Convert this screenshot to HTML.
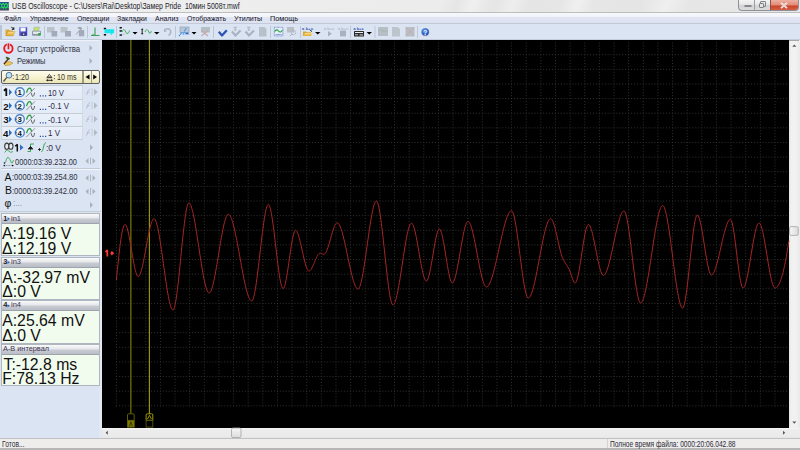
<!DOCTYPE html>
<html><head><meta charset="utf-8"><style>*{margin:0;padding:0;box-sizing:border-box}
html,body{width:800px;height:450px;overflow:hidden;background:#f0f0f0;font-family:"Liberation Sans",sans-serif;color:#000;position:relative}
.a{position:absolute}
.t{position:absolute;white-space:pre;line-height:1;transform-origin:0 0}
#title{left:0;top:0;width:800px;height:13px;background:linear-gradient(110deg,#efefef 0,#ececec 55%,#e6e6e6 57%,#f0f0f0 59%,#e7e7e7 61%,#e6e6e6 62%,#eeeeee 64%,#e5e5e5 66%,#e6e6e6 70%,#f0f0f0 72%,#e6e6e6 74%,#e5e5e5 80%,#efefef 83%,#e6e6e6 86%,#e8e8e8 100%);border-bottom:1px solid #bdbdbd}
#menu{left:0;top:13px;width:800px;height:11px;background:linear-gradient(#f7f8fc 0,#f2f4fa 35%,#e0e4f3 45%,#dde2f1 100%);border-bottom:1px solid #c4c9d8}
#tool{left:0;top:24px;width:800px;height:16px;background:#dae4f2}
#panel{left:0;top:40px;width:102px;height:397.5px;background:#dae4f2}
#scope{left:101.5px;top:40px;width:687.5px;height:387.5px;background:#000}
#vscroll{left:789px;top:40px;width:10px;height:387px;background:linear-gradient(90deg,#e6e6e6,#f1f1f1 25%,#f1f1f1 75%,#e9e9e9);border-top:1px solid #a8a8a8}
#hscroll{left:101px;top:427.5px;width:699px;height:10.5px;background:linear-gradient(#f6f6f6,#ececec 20%,#ebebeb 80%,#e6e6e6)}
#status{left:0;top:437.5px;width:800px;height:12.5px;background:#efedeb;border-top:1.5px solid #bfc1c4;border-bottom:2px solid #b6b6b6}
.sep{position:absolute;top:26px;width:1px;height:12px;background:#b7c2d3;box-shadow:1px 0 0 #f4f7fb}
.row{position:absolute;left:1px;width:82px;height:13px;background:linear-gradient(#e9f0fa,#e3ebf7);border-top:1px solid #c6ccd4;border-left:1px solid #cdd5df;border-right:1px solid #d2dae4}
.box{position:absolute;left:1px;width:98.5px;border:1px solid #b0b6c0}
.bh{position:absolute;left:0;top:0;width:97px;height:10px;background:linear-gradient(#fafafa,#e6e7ea 45%,#c9ccd3 55%,#b9bdc6);border-bottom:1px solid #9ea3ad}
.bb{position:absolute;left:0;width:97px;background:#f1fcee}
</style></head><body><div id="title" class="a"></div>
<div id="menu" class="a"></div>
<div id="tool" class="a"></div>
<div id="panel" class="a"></div>
<div id="scope" class="a"></div>
<div id="vscroll" class="a"></div>
<div id="hscroll" class="a"></div>
<div id="status" class="a"></div>

<!-- title -->
<svg class="a" style="left:0;top:0" width="10" height="12"><rect x="0" y="2" width="8.8" height="8.3" fill="#2a3ea0"/><rect x="0" y="8.6" width="8.8" height="1.7" fill="#4a5058"/><path d="M0.3 3.2 L1.8 5.2 L3.2 3.2 L4.6 5.2 L6 3.2 L7.5 5.2 L8.6 3.5 M0.5 8.3 L1.8 6.3 L3.2 8.3 L4.4 6.2 L5.8 8.3 L7.2 6.3 L8.5 8" stroke="#1ee048" stroke-width="1.1" fill="none"/></svg>
<div class="t" style="left:12.3px;top:1.99px;font-size:8.4px;color:#1d1d2d;font-weight:normal;font-family:'Liberation Sans',sans-serif;transform:scaleX(0.829);">USB Oscilloscope - C:\Users\Rai\Desktop\Замер Pride  10мин 5008т.mwf</div>
<div class="a" style="left:738px;top:0;width:61px;height:11px;border:1px solid #8d9097;border-top:none;border-radius:0 0 4px 4px;overflow:hidden;background:linear-gradient(#f4f4f4,#e4e4e4 50%,#d2d2d2 51%,#dcdcdc)">
 <div class="a" style="left:15px;top:0;width:1px;height:11px;background:#9a9da3"></div>
 <div class="a" style="left:31px;top:0;width:29px;height:11px;background:linear-gradient(#eeb1a3,#e18a75 45%,#c9452b 55%,#d9644a);border-left:1px solid #8f5147"></div>
 <div class="a" style="left:5px;top:4.5px;width:7.5px;height:2.8px;border:1px solid #85888e;border-radius:1px;background:#e8e8e8"></div>
 <div class="a" style="left:21px;top:1px;width:5.5px;height:5.5px;border:1px solid #7d8086;border-radius:1px;background:transparent"></div>
 <div class="a" style="left:19.5px;top:2.5px;width:5.5px;height:5.5px;border:1px solid #7d8086;border-radius:1px;background:#e4e4e4"></div>
 <svg class="a" style="left:41px;top:2px" width="8" height="7"><path d="M1 0.8 L7 6.2 M7 0.8 L1 6.2" stroke="#fff" stroke-width="1.8"/><path d="M1 0.8 L7 6.2 M7 0.8 L1 6.2" stroke="#6a2a20" stroke-width="0.5" opacity="0.5"/></svg>
</div>

<!-- menu -->
<div class="t" style="left:4.1px;top:15.21px;font-size:7.2px;color:#14141f;font-weight:normal;font-family:'Liberation Sans',sans-serif;transform:scaleX(0.962);">Файл</div>
<div class="t" style="left:29.5px;top:15.21px;font-size:7.2px;color:#14141f;font-weight:normal;font-family:'Liberation Sans',sans-serif;transform:scaleX(0.963);">Управление</div>
<div class="t" style="left:76.5px;top:15.21px;font-size:7.2px;color:#14141f;font-weight:normal;font-family:'Liberation Sans',sans-serif;transform:scaleX(0.961);">Операции</div>
<div class="t" style="left:117px;top:15.21px;font-size:7.2px;color:#14141f;font-weight:normal;font-family:'Liberation Sans',sans-serif;transform:scaleX(0.964);">Закладки</div>
<div class="t" style="left:155px;top:15.21px;font-size:7.2px;color:#14141f;font-weight:normal;font-family:'Liberation Sans',sans-serif;transform:scaleX(0.968);">Анализ</div>
<div class="t" style="left:187px;top:15.21px;font-size:7.2px;color:#14141f;font-weight:normal;font-family:'Liberation Sans',sans-serif;transform:scaleX(0.960);">Отображать</div>
<div class="t" style="left:233.8px;top:15.21px;font-size:7.2px;color:#14141f;font-weight:normal;font-family:'Liberation Sans',sans-serif;transform:scaleX(0.988);">Утилиты</div>
<div class="t" style="left:270px;top:15.21px;font-size:7.2px;color:#14141f;font-weight:normal;font-family:'Liberation Sans',sans-serif;transform:scaleX(1.008);">Помощь</div>

<!-- toolbar -->
<div class="a" style="left:0;top:38.5px;width:800px;height:1px;background:#c3ccd9"></div>
<div class="a" style="left:0;top:39.5px;width:101px;height:1px;background:#eef2f8"></div>
<div class="a" style="left:99px;top:40px;width:2.5px;height:397.5px;background:#e2e9f2"></div>
<div class="a" style="left:0;top:25px;width:1.5px;height:14px;background:#b9c4d4"></div>
<svg class="a" style="left:0;top:0" width="440" height="40">
 <defs>
  <linearGradient id="fold" x1="0" y1="0" x2="0" y2="1"><stop offset="0" stop-color="#fbe08a"/><stop offset="1" stop-color="#e0a828"/></linearGradient>
  <linearGradient id="flop" x1="0" y1="0" x2="1" y2="1"><stop offset="0" stop-color="#7474e8"/><stop offset="1" stop-color="#3434a8"/></linearGradient>
  <radialGradient id="help" cx="0.4" cy="0.35" r="0.7"><stop offset="0" stop-color="#5a9cf0"/><stop offset="1" stop-color="#1c48b8"/></radialGradient>
 </defs>
 <!-- separators -->
 <g stroke="#bcc7d6" stroke-width="1">
 <path d="M44.5 26 V38 M87.5 26 V38 M116.5 26 V38 M175.5 26 V38 M213.5 26 V38 M270.5 26 V38 M300.5 26 V38 M350.5 26 V38 M375 26 V38 M417.5 26 V38"/>
 </g>
 <!-- open folder -->
 <path d="M5.5 29.5 L9 29.5 L10 30.5 L13 30.5 L13 35.8 L5.5 35.8 Z" fill="#d9a838"/>
 <path d="M6 35.8 L8 31.5 L15 31.5 L13.2 35.8 Z" fill="url(#fold)" stroke="#c08a20" stroke-width="0.4"/>
 <path d="M11.3 26.8 L13.8 29.3 M13.8 27.3 V29.3 H11.8" stroke="#111" stroke-width="1" fill="none"/>
 <!-- save -->
 <rect x="19.2" y="27.2" width="8" height="8.6" fill="url(#flop)"/>
 <rect x="20.6" y="27.6" width="5" height="3.8" fill="#fafafa"/>
 <rect x="21.5" y="32.8" width="3.8" height="3" fill="#2a2a5a"/>
 <rect x="22.8" y="33.4" width="1.6" height="1.8" fill="#d0d0e0"/>
 <!-- print -->
 <path d="M34 27.2 L39.5 27.2 L38.5 31 L33.5 31 Z" fill="#c8e070" stroke="#90a090" stroke-width="0.4"/>
 <rect x="32" y="30.8" width="9" height="5" rx="1" fill="#8a98a8"/>
 <rect x="33" y="31.6" width="7" height="2.3" fill="#e4eaf0"/>
 <circle cx="39.3" cy="34.3" r="1.3" fill="#20b030"/>
 <!-- grey copy icons -->
 <rect x="47" y="27" width="7.5" height="5.5" fill="#bcc3c8"/>
 <rect x="51.5" y="31" width="5.7" height="5.5" fill="#a3abbb"/>
 <rect x="60.5" y="27" width="7" height="5.5" fill="#bcc3c8"/>
 <rect x="65" y="31" width="6" height="5.5" fill="#a3abbb"/>
 <path d="M76 34.5 L80.5 29.5" stroke="#a89a9a" stroke-width="1"/>
 <path d="M77 28 L80 26.8 L82.5 28.5 L81 29.8 Z" fill="#9aa0a0"/>
 <rect x="78.8" y="30" width="5.4" height="6.3" fill="#a3abbb"/>
 <!-- green trigger -->
 <path d="M91 35.5 L99.5 35.5" stroke="#3aa050" stroke-width="1"/>
 <path d="M95 27.5 V35.5" stroke="#3aa050" stroke-width="1.1"/>
 <path d="M92 35.5 L93 33.5 L94.2 35.5 Z" fill="#3aa050"/>
 <!-- cyan -->
 <rect x="103.8" y="27.8" width="2.3" height="1.6" fill="#111"/>
 <rect x="103.8" y="34" width="2.3" height="1.6" fill="#111"/>
 <rect x="104.5" y="29.2" width="9.6" height="4" fill="#18e6ec"/>
 <path d="M110 33.2 L112.8 33.2 L111.3 35.2 Z" fill="#18e6ec"/>
 <!-- wave sel 1 -->
 <rect x="119.6" y="27" width="2.3" height="1.5" fill="#111"/>
 <rect x="119.6" y="30.2" width="2.3" height="1.5" fill="#111"/>
 <rect x="119.6" y="34.3" width="2.3" height="1.5" fill="#111"/>
 <path d="M121.8 34.3 H124.8" stroke="#a0a0a0" stroke-width="0.5"/>
 <path d="M122 32 Q123.5 28 125 30.5 Q126.5 34.5 128 33.5 Q129 32.5 129.6 30.5" stroke="#3aa850" stroke-width="0.9" fill="none"/>
 <path d="M132.5 32 L137.5 32 L135 34.6 Z" fill="#000"/>
 <!-- wave sel 2 -->
 <path d="M142.2 29.5 V33.5" stroke="#111" stroke-width="0.9"/>
 <path d="M140.9 29.8 L142.2 28.3 L143.5 29.8 Z M140.9 33.2 L142.2 34.7 L143.5 33.2 Z" fill="#111"/>
 <path d="M145 32 Q146.5 28 148 30.5 Q149.5 34.5 150.5 33 Q151 32 151.3 31" stroke="#3aa850" stroke-width="0.9" fill="none"/>
 <path d="M154 32 L159.5 32 L156.75 34.6 Z" fill="#000"/>
 <!-- undo grey -->
 <path d="M165.5 29.5 Q169 27.5 170.5 30.5 Q171.5 33.5 168.5 35.5" stroke="#a9b5c5" stroke-width="1.5" fill="none"/>
 <path d="M164 28 L166.8 31.5 L164 32 Z" fill="#a9b5c5"/>
 <!-- blue chart with dropdown -->
 <rect x="180" y="27" width="9" height="5.5" fill="#b8c8d8" stroke="#8898a8" stroke-width="0.6"/>
 <path d="M179 36 L181.5 33 L183.5 34 L185 30 L186.5 28" stroke="#2a88f0" stroke-width="1.2" stroke-dasharray="1.2 0.6" fill="none"/>
 <path d="M184.5 34.2 L187 32.2 L189.5 34.2 Z" fill="#2060d0"/>
 <path d="M191.5 32 L196.5 32 L194 34.6 Z" fill="#000"/>
 <!-- grey x -->
 <rect x="201" y="27" width="9" height="5.5" fill="#b6bec6"/>
 <path d="M201.5 30.5 L208 36 M208 30.5 L201.5 36" stroke="#c4a8a8" stroke-width="1.1"/>
 <!-- checks -->
 <path d="M218.8 31.8 L222 35.5 L226.8 30.2" stroke="#2c54b4" stroke-width="2.3" fill="none" stroke-linejoin="round"/>
 <path d="M232 31.5 L235.5 35.5 L240.5 30.5" stroke="#a8b2c0" stroke-width="2.2" fill="none"/>
 <path d="M233.5 27.3 H237 M235.3 27 V30.5 M234 29.3 L235.3 30.7 L236.6 29.3" stroke="#a8b2c0" stroke-width="0.9" fill="none"/>
 <path d="M245.5 31.5 L249 35.5 L254 30.5" stroke="#a8b2c0" stroke-width="2.2" fill="none"/>
 <path d="M247 27.3 H250.5 M248.8 27 V30.5 M247.5 29.3 L248.8 30.7 L250.1 29.3" stroke="#a8b2c0" stroke-width="0.9" fill="none"/>
 <path d="M259 27 L264.5 27 L266.5 29 L266.5 36.5 L259 36.5 Z" fill="#b8c0ca"/>
 <!-- chart icon -->
 <rect x="274.3" y="27.3" width="8.6" height="8.6" fill="#e6eef6" stroke="#4a68c0" stroke-width="0.7" stroke-dasharray="0.8 0.5"/>
 <path d="M274.8 31.5 Q276.5 28.5 278.5 31 Q280.5 33.5 282.5 30" stroke="#28a048" stroke-width="1.1" fill="none"/>
 <path d="M275.5 34.5 h6.5" stroke="#3858c0" stroke-width="0.8" stroke-dasharray="0.8 0.5"/>
 <!-- grey magnifier -->
 <rect x="287" y="27" width="7" height="5.5" fill="#b8c0c6"/>
 <circle cx="293.5" cy="32.5" r="2.2" fill="none" stroke="#a8b2c0" stroke-width="0.8"/>
 <path d="M292 34 L289.8 36.2" stroke="#a8b2c0" stroke-width="1"/>
 <!-- abc folder -->
 <text x="302" y="30.2" font-size="3.8" font-weight="bold" fill="#3050b0" font-family="Liberation Sans" textLength="11">a b+c</text>
 <path d="M303 36 L303 31.5 L306 31.5 L307 32.3 L311 32.3 L311 36 Z" fill="#d8a838"/>
 <path d="M303.5 36 L305 33 L312.5 33 L311 36 Z" fill="url(#fold)"/>
 <path d="M310.2 30.3 L312 31.5" stroke="#111" stroke-width="0.9"/>
 <path d="M315 32 L320.5 32 L317.75 34.6 Z" fill="#000"/>
 <text x="324" y="30.2" font-size="3.8" font-weight="bold" fill="#b0b8c4" font-family="Liberation Sans" textLength="10">a b+c</text>
 <path d="M328 31 L331.8 33.7 L328 36.4 Z" fill="#a6b2c2"/>
 <text x="338" y="30.2" font-size="3.8" font-weight="bold" fill="#b0b8c4" font-family="Liberation Sans" textLength="10">a b+c</text>
 <rect x="340" y="30.6" width="6" height="5.8" fill="#a6b2c2"/>
 <!-- abc bar -->
 <text x="353.5" y="30.2" font-size="3.8" font-weight="bold" fill="#3050b0" font-family="Liberation Sans" textLength="10">a b+c</text>
 <rect x="354" y="31" width="10" height="5.5" rx="0.5" fill="#2a2a2a"/>
 <rect x="355" y="32" width="8" height="1" fill="#e8eef8"/>
 <rect x="355" y="34.3" width="3" height="1" fill="#c8ccd4"/><rect x="359.5" y="34.5" width="3.5" height="0.9" fill="#f0f0f0"/>
 <path d="M366.5 32 L372 32 L369.25 34.6 Z" fill="#000"/>
 <!-- greys -->
 <rect x="378" y="27" width="10" height="9" rx="0.5" fill="#b6bec6"/>
 <path d="M378.5 31 Q381 28.5 383 31 Q385 33 387.5 30.5" stroke="#a2b4a8" stroke-width="0.8" fill="none"/>
 <path d="M392 27 L398 27 L400 29 L400 36.5 L392 36.5 Z" fill="#bcc4cc"/>
 <rect x="405.5" y="27" width="9" height="9.5" fill="#b8c0c6"/>
 <path d="M406 27.5 L414 36 M414 27.5 L406 36" stroke="#c8a8ac" stroke-width="0.9"/>
 <!-- help -->
 <circle cx="425.5" cy="32.2" r="4.2" fill="#c8ccd4"/>
 <circle cx="425.2" cy="31.9" r="3.7" fill="url(#help)"/>
 <text x="423.3" y="34.6" font-size="6.5" font-weight="bold" fill="#fff" font-family="Liberation Sans">?</text>
</svg>

<!-- panel: start / modes -->
<svg class="a" style="left:0;top:40px" width="102" height="30">
 <circle cx="8.4" cy="8.5" r="4.2" fill="none" stroke="#ec1820" stroke-width="1.9"/>
 <rect x="6.9" y="2.6" width="3" height="5.2" fill="#dae4f2"/>
 <rect x="7.6" y="3.3" width="1.7" height="6" fill="#ec1820"/>
 <path d="M4 23.5 Q8 20 13 23 Q10 26 5 25.5 Z" fill="#e8c860" stroke="#a88420" stroke-width="0.5"/>
 <path d="M4 24 L9 18" stroke="#5a2a10" stroke-width="1.3"/>
 <path d="M6.5 16.5 L10 18.5 L9 20 L5.5 18 Z" fill="#3a5a20"/>
 <path d="M89.5 5 L92.5 8 L89.5 11 Z" fill="#a9b0bb"/>
 <path d="M89.5 18 L92.5 21 L89.5 24 Z" fill="#a9b0bb"/>
</svg>
<div class="t" style="left:17px;top:44.75px;font-size:8.8px;color:#30303e;font-weight:normal;font-family:'Liberation Sans',sans-serif;transform:scaleX(0.879);">Старт устройства</div>
<div class="t" style="left:17px;top:57.45px;font-size:8.8px;color:#30303e;font-weight:normal;font-family:'Liberation Sans',sans-serif;transform:scaleX(0.852);">Режимы</div>

<!-- zoom bar -->
<div class="a" style="left:1px;top:70px;width:99px;height:14px;border:1px solid #5f5f5f;border-radius:2px;background:linear-gradient(#fdfcef,#f7f3d2 50%,#ebe6b6)"></div>
<div class="a" style="left:82px;top:71px;width:2px;height:12px;background:#9c9a80"></div>
<div class="a" style="left:90.5px;top:71px;width:1.5px;height:12px;background:#9c9a80"></div>
<svg class="a" style="left:0;top:70px" width="102" height="14">
 <circle cx="9" cy="5.2" r="2.9" fill="#bfe0f6" stroke="#4a6c90" stroke-width="0.9"/>
 <path d="M6.8 7.4 L3.5 11.5" stroke="#555" stroke-width="1.4"/>
 <path d="M47.3 7 L49.4 4.4 L51.5 7 Z" fill="none" stroke="#222" stroke-width="0.75"/>
 <path d="M46.5 7.7 H52.3" stroke="#111" stroke-width="0.8"/>
 <path d="M47.2 10.3 H51.8" stroke="#111" stroke-width="0.9"/>
 <path d="M46 10.3 L47.7 9.1 L47.7 11.5 Z M53 10.3 L51.3 9.1 L51.3 11.5 Z" fill="#111"/>
 <rect x="53.9" y="5.1" width="1" height="1" fill="#444"/><rect x="53.9" y="8.2" width="1" height="1" fill="#444"/>
 <rect x="12.8" y="5.2" width="0.9" height="0.9" fill="#555"/><rect x="12.8" y="8.2" width="0.9" height="0.9" fill="#555"/>
 <path d="M85.5 7 L89.5 4.5 L89.5 9.5 Z" fill="#000"/>
 <path d="M93.2 4.5 L97 7 L93.2 9.5 Z" fill="#000"/>
</svg>
<div class="t" style="left:15px;top:73.40px;font-size:8.5px;color:#3a3428;font-weight:normal;font-family:'Liberation Sans',sans-serif;transform:scaleX(0.846);">1:20</div>
<div class="t" style="left:56.5px;top:73.40px;font-size:8.5px;color:#3a3428;font-weight:normal;font-family:'Liberation Sans',sans-serif;transform:scaleX(0.842);">10 ms</div>

<!-- channel rows -->
<div class="row" style="top:85px;height:14px"></div>
<div class="row" style="top:99px;height:13.5px"></div>
<div class="row" style="top:112.5px;height:13.5px"></div>
<div class="row" style="top:126px;height:13.5px;border-bottom:1px solid #c6ccd4"></div>
<svg class="a" style="left:0;top:85px" width="102" height="56">
 <g id="chi">
 <path d="M9 4 L12 7.2 L9 10.4 Z" fill="#2f6cc0"/>
 <circle cx="19.9" cy="7.2" r="4.4" fill="#f4f8fc" stroke="#4a82cc" stroke-width="1.4"/>
 <path d="M14.8 5.4 L17.2 7.2 L14.8 9 Z" fill="#2f6cc0"/>
 <path d="M26.6 7.6 Q28 2.4 30.2 3.2 Q31.2 3.8 31.6 6.2" stroke="#2a9a40" stroke-width="1.3" fill="none"/>
 <path d="M26.3 11.6 L34.8 3" stroke="#444" stroke-width="0.8" stroke-dasharray="1 0.4"/>
 <path d="M31.2 7.8 Q32 11.8 33 11.5 Q34 11 34.6 7.5" stroke="#666" stroke-width="1" fill="none"/>
 <path d="M39.8 10.8 h1.2 M42.4 10.8 h1.2 M45 10.8 h1.2" stroke="#2b4fa6" stroke-width="1.2"/>
 <path d="M86.5 10 Q88 4.5 90 3.8 M87 7.2 L89.5 7.2" stroke="#b2bac6" stroke-width="0.9" fill="none"/>
 <rect x="91.6" y="3.2" width="1" height="7.5" fill="#c4ccd6"/>
 <path d="M94 3.8 L97.5 7.1 L94 10.4 Z" fill="#b2bac6"/>
 </g>
 <use href="#chi" y="13.5"/><use href="#chi" y="27"/><use href="#chi" y="40.5"/>
</svg>
<svg class="a" style="left:0;top:84px" width="12" height="14"><path d="M6.3 12 V4.6 M3.9 6.7 L6.5 4.5" stroke="#111" stroke-width="1.8" fill="none"/></svg>
<div class="t" style="left:17.6px;top:89.00px;font-size:7.8px;color:#111;font-weight:bold;font-family:'Liberation Sans',sans-serif;">1</div>
<div class="t" style="left:48px;top:88.60px;font-size:8.5px;color:#2e2a48;font-weight:normal;font-family:'Liberation Sans',sans-serif;transform:scaleX(0.914);">10 V</div>
<div class="t" style="left:3.2px;top:101.60px;font-size:9.8px;color:#111;font-weight:bold;font-family:'Liberation Sans',sans-serif;">2</div>
<div class="t" style="left:17.6px;top:102.50px;font-size:7.8px;color:#111;font-weight:bold;font-family:'Liberation Sans',sans-serif;">2</div>
<div class="t" style="left:47.6px;top:102.20px;font-size:8.5px;color:#2e2a48;font-weight:normal;font-family:'Liberation Sans',sans-serif;transform:scaleX(0.926);">-0.1 V</div>
<div class="t" style="left:3.2px;top:115.10px;font-size:9.8px;color:#111;font-weight:bold;font-family:'Liberation Sans',sans-serif;">3</div>
<div class="t" style="left:17.6px;top:116.00px;font-size:7.8px;color:#111;font-weight:bold;font-family:'Liberation Sans',sans-serif;">3</div>
<div class="t" style="left:47.6px;top:115.70px;font-size:8.5px;color:#2e2a48;font-weight:normal;font-family:'Liberation Sans',sans-serif;transform:scaleX(0.926);">-0.1 V</div>
<div class="t" style="left:3.0px;top:128.60px;font-size:9.8px;color:#111;font-weight:bold;font-family:'Liberation Sans',sans-serif;">4</div>
<div class="t" style="left:17.6px;top:129.50px;font-size:7.8px;color:#111;font-weight:bold;font-family:'Liberation Sans',sans-serif;">4</div>
<div class="t" style="left:48px;top:129.10px;font-size:8.5px;color:#2e2a48;font-weight:normal;font-family:'Liberation Sans',sans-serif;transform:scaleX(0.940);">1 V</div>

<!-- trigger & time rows -->
<svg class="a" style="left:0;top:140px" width="102" height="72">
 <ellipse cx="6.8" cy="6.2" rx="2.1" ry="3.1" fill="#e8ecf0" stroke="#3a3a3a" stroke-width="1.1"/>
 <ellipse cx="10.9" cy="6.2" rx="2.1" ry="3.1" fill="#e8ecf0" stroke="#3a3a3a" stroke-width="1.1"/>
 <path d="M4.8 12.5 Q7 8.5 8.8 11 Q10.5 13.5 13 11.5" stroke="#3aa850" stroke-width="0.9" fill="none"/>
 <path d="M20 4.5 L23.5 7.5 L20 10.5 Z" fill="#2f6cc0"/>
 <path d="M27.5 11.5 L30.5 11.5 L30.5 4 L34 4" stroke="#2aa040" stroke-width="0.9" fill="none"/>
 <path d="M28.5 8.5 L30.5 6.5 L32.5 8.5 Z M28 9 h5" stroke="#111" stroke-width="0.8" fill="#111"/>
 <path d="M38 9.5 h3 M39.5 8 v3" stroke="#111" stroke-width="0.8"/>
 <path d="M41.5 12 Q43 11 43.5 7 Q44 3 46 2.5" stroke="#2aa040" stroke-width="0.9" fill="none"/>
 <path d="M90 4.5 L93 7.5 L90 10.5 Z" fill="#a9b0bb"/>
 <!-- time icon -->
 <path d="M5.5 22.5 Q7 16 8.5 17.5 Q10 19 11.5 23 Q12.5 24 13.5 20" stroke="#3aa850" stroke-width="0.9" fill="none"/>
 <path d="M4.5 25.5 h8" stroke="#555" stroke-width="0.7" stroke-dasharray="0.8 0.8"/>
 <circle cx="4.5" cy="23" r="0.8" fill="#111"/><circle cx="4.3" cy="25.6" r="0.8" fill="#111"/><circle cx="12.7" cy="25.6" r="0.8" fill="#111"/>
 <g fill="#aab1bc">
  <path d="M88.5 18 L85.5 21 L88.5 24 Z"/><rect x="90" y="17.5" width="0.9" height="7"/><path d="M92.5 18 L95.5 21 L92.5 24 Z"/>
  <path d="M88.5 35 L85.5 38 L88.5 41 Z"/><rect x="90" y="34.5" width="0.9" height="7"/><path d="M92.5 35 L95.5 38 L92.5 41 Z"/>
  <path d="M88.5 48.5 L85.5 51.5 L88.5 54.5 Z"/><rect x="90" y="48" width="0.9" height="7"/><path d="M92.5 48.5 L95.5 51.5 L92.5 54.5 Z"/>
  <path d="M90 62 L93 65 L90 68 Z"/>
 </g>
</svg>
<svg class="a" style="left:12px;top:140px" width="12" height="14"><path d="M5.3 11.6 V4.3 M3.2 6.3 L5.5 4.2" stroke="#111" stroke-width="1.5" fill="none"/></svg>
<div class="t" style="left:45.5px;top:144.10px;font-size:8.5px;color:#2e2a48;font-weight:normal;font-family:'Liberation Sans',sans-serif;transform:scaleX(0.992);">:0 V</div>
<div class="t" style="left:15px;top:157.68px;font-size:9px;color:#2e2e40;font-weight:normal;font-family:'Liberation Sans',sans-serif;transform:scaleX(0.826);">0000:03:39.232.00</div>
<div class="a" style="left:1px;top:168px;width:99px;height:1px;background:#c2cad6;box-shadow:0 1px 0 #f2f5fa"></div>
<div class="t" style="left:4.6px;top:171.51px;font-size:10.5px;color:#111;font-weight:normal;font-family:'Liberation Sans',sans-serif;">A</div>
<div class="t" style="left:11.5px;top:172.98px;font-size:9px;color:#2e2e40;font-weight:normal;font-family:'Liberation Sans',sans-serif;transform:scaleX(0.844);">:0000:03:39.254.80</div>
<div class="t" style="left:5px;top:185.31px;font-size:10.5px;color:#111;font-weight:normal;font-family:'Liberation Sans',sans-serif;">B</div>
<div class="t" style="left:11.5px;top:186.78px;font-size:9px;color:#2e2e40;font-weight:normal;font-family:'Liberation Sans',sans-serif;transform:scaleX(0.844);">:0000:03:39.242.00</div>
<div class="t" style="left:4.5px;top:197.71px;font-size:10.5px;color:#111;font-weight:normal;font-family:'Liberation Sans',sans-serif;">φ</div>
<div class="t" style="left:12.5px;top:198.98px;font-size:9px;color:#8a8aa0;font-weight:normal;font-family:'Liberation Sans',sans-serif;transform:scaleX(0.899);">:...</div>

<!-- measurement boxes -->
<div class="a" style="left:0;top:211px;width:101px;height:1px;background:#c4ccd8"></div>
<div class="box" style="top:213px;height:43px"><div class="bh"></div><div class="bb" style="top:10px;height:31px"></div></div>
<div class="box" style="top:256.5px;height:43.5px"><div class="bh"></div><div class="bb" style="top:10px;height:31.5px"></div></div>
<div class="box" style="top:300px;height:43.5px"><div class="bh"></div><div class="bb" style="top:10px;height:31.5px"></div></div>
<div class="box" style="top:343.5px;height:42.5px"><div class="bh"></div><div class="bb" style="top:10px;height:30.5px"></div></div>
<svg class="a" style="left:0;top:213px" width="102" height="140">
 <path d="M7.5 4.2 L10 5.8 L7.5 7.4 Z" fill="#2f6cc0"/>
 <path d="M7.5 47.7 L10 49.3 L7.5 50.9 Z" fill="#2f6cc0"/>
 <path d="M7.5 91.2 L10 92.8 L7.5 94.4 Z" fill="#2f6cc0"/>
</svg>
<div class="t" style="left:3.3px;top:214.54px;font-size:7.4px;color:#222;font-weight:bold;font-family:'Liberation Sans',sans-serif;">1</div>
<div class="t" style="left:10.5px;top:214.54px;font-size:7.4px;color:#3a3450;font-weight:normal;font-family:'Liberation Sans',sans-serif;transform:scaleX(1.013);">in1</div>
<div class="t" style="left:2.2px;top:226.23px;font-size:15.8px;color:#111;font-weight:normal;font-family:'Liberation Sans',sans-serif;transform:scaleX(0.999);">A:19.16 V</div>
<div class="t" style="left:2.2px;top:240.83px;font-size:15.8px;color:#111;font-weight:normal;font-family:'Liberation Sans',sans-serif;transform:scaleX(0.998);">Δ:12.19 V</div>
<div class="t" style="left:3.2px;top:257.64px;font-size:7.4px;color:#222;font-weight:bold;font-family:'Liberation Sans',sans-serif;">3</div>
<div class="t" style="left:10.5px;top:257.64px;font-size:7.4px;color:#3a3450;font-weight:normal;font-family:'Liberation Sans',sans-serif;transform:scaleX(1.013);">in3</div>
<div class="t" style="left:2.2px;top:269.73px;font-size:15.8px;color:#111;font-weight:normal;font-family:'Liberation Sans',sans-serif;">A:-32.97 mV</div>
<div class="t" style="left:2.2px;top:284.33px;font-size:15.8px;color:#111;font-weight:normal;font-family:'Liberation Sans',sans-serif;">Δ:0 V</div>
<div class="t" style="left:3.2px;top:301.14px;font-size:7.4px;color:#222;font-weight:bold;font-family:'Liberation Sans',sans-serif;">4</div>
<div class="t" style="left:10.5px;top:301.14px;font-size:7.4px;color:#3a3450;font-weight:normal;font-family:'Liberation Sans',sans-serif;transform:scaleX(1.013);">in4</div>
<div class="t" style="left:2.2px;top:313.23px;font-size:15.8px;color:#111;font-weight:normal;font-family:'Liberation Sans',sans-serif;">A:25.64 mV</div>
<div class="t" style="left:2.2px;top:327.83px;font-size:15.8px;color:#111;font-weight:normal;font-family:'Liberation Sans',sans-serif;">Δ:0 V</div>
<div class="t" style="left:2.5px;top:344.64px;font-size:7.4px;color:#3a3450;font-weight:normal;font-family:'Liberation Sans',sans-serif;transform:scaleX(0.992);">A-B интервал</div>
<div class="t" style="left:3.5px;top:356.73px;font-size:15.8px;color:#111;font-weight:normal;font-family:'Liberation Sans',sans-serif;">T:-12.8 ms</div>
<div class="t" style="left:2.2px;top:371.33px;font-size:15.8px;color:#111;font-weight:normal;font-family:'Liberation Sans',sans-serif;">F:78.13 Hz</div>

<!-- scope -->
<svg class="a" style="left:0;top:0" width="800" height="450">
<g stroke="#323232" stroke-width="1" stroke-dasharray="1 1.926"><line x1="116.50" y1="42.5" x2="116.50" y2="407.5"/><line x1="131.13" y1="42.5" x2="131.13" y2="407.5"/><line x1="145.77" y1="42.5" x2="145.77" y2="407.5"/><line x1="160.40" y1="42.5" x2="160.40" y2="407.5"/><line x1="175.03" y1="42.5" x2="175.03" y2="407.5"/><line x1="189.66" y1="42.5" x2="189.66" y2="407.5"/><line x1="204.30" y1="42.5" x2="204.30" y2="407.5"/><line x1="218.93" y1="42.5" x2="218.93" y2="407.5"/><line x1="233.56" y1="42.5" x2="233.56" y2="407.5"/><line x1="248.20" y1="42.5" x2="248.20" y2="407.5"/><line x1="262.83" y1="42.5" x2="262.83" y2="407.5"/><line x1="277.46" y1="42.5" x2="277.46" y2="407.5"/><line x1="292.10" y1="42.5" x2="292.10" y2="407.5"/><line x1="306.73" y1="42.5" x2="306.73" y2="407.5"/><line x1="321.36" y1="42.5" x2="321.36" y2="407.5"/><line x1="336.00" y1="42.5" x2="336.00" y2="407.5"/><line x1="350.63" y1="42.5" x2="350.63" y2="407.5"/><line x1="365.26" y1="42.5" x2="365.26" y2="407.5"/><line x1="379.89" y1="42.5" x2="379.89" y2="407.5"/><line x1="394.53" y1="42.5" x2="394.53" y2="407.5"/><line x1="409.16" y1="42.5" x2="409.16" y2="407.5"/><line x1="423.79" y1="42.5" x2="423.79" y2="407.5"/><line x1="438.43" y1="42.5" x2="438.43" y2="407.5"/><line x1="453.06" y1="42.5" x2="453.06" y2="407.5"/><line x1="467.69" y1="42.5" x2="467.69" y2="407.5"/><line x1="482.32" y1="42.5" x2="482.32" y2="407.5"/><line x1="496.96" y1="42.5" x2="496.96" y2="407.5"/><line x1="511.59" y1="42.5" x2="511.59" y2="407.5"/><line x1="526.22" y1="42.5" x2="526.22" y2="407.5"/><line x1="540.86" y1="42.5" x2="540.86" y2="407.5"/><line x1="555.49" y1="42.5" x2="555.49" y2="407.5"/><line x1="570.12" y1="42.5" x2="570.12" y2="407.5"/><line x1="584.76" y1="42.5" x2="584.76" y2="407.5"/><line x1="599.39" y1="42.5" x2="599.39" y2="407.5"/><line x1="614.02" y1="42.5" x2="614.02" y2="407.5"/><line x1="628.65" y1="42.5" x2="628.65" y2="407.5"/><line x1="643.29" y1="42.5" x2="643.29" y2="407.5"/><line x1="657.92" y1="42.5" x2="657.92" y2="407.5"/><line x1="672.55" y1="42.5" x2="672.55" y2="407.5"/><line x1="687.19" y1="42.5" x2="687.19" y2="407.5"/><line x1="701.82" y1="42.5" x2="701.82" y2="407.5"/><line x1="716.45" y1="42.5" x2="716.45" y2="407.5"/><line x1="731.09" y1="42.5" x2="731.09" y2="407.5"/><line x1="745.72" y1="42.5" x2="745.72" y2="407.5"/><line x1="760.35" y1="42.5" x2="760.35" y2="407.5"/><line x1="774.99" y1="42.5" x2="774.99" y2="407.5"/><line x1="116" y1="54.70" x2="789" y2="54.70"/><line x1="116" y1="69.33" x2="789" y2="69.33"/><line x1="116" y1="83.96" x2="789" y2="83.96"/><line x1="116" y1="98.59" x2="789" y2="98.59"/><line x1="116" y1="113.22" x2="789" y2="113.22"/><line x1="116" y1="127.85" x2="789" y2="127.85"/><line x1="116" y1="142.48" x2="789" y2="142.48"/><line x1="116" y1="157.11" x2="789" y2="157.11"/><line x1="116" y1="171.74" x2="789" y2="171.74"/><line x1="116" y1="186.37" x2="789" y2="186.37"/><line x1="116" y1="201.00" x2="789" y2="201.00"/><line x1="116" y1="215.63" x2="789" y2="215.63"/><line x1="116" y1="230.26" x2="789" y2="230.26"/><line x1="116" y1="244.89" x2="789" y2="244.89"/><line x1="116" y1="259.52" x2="789" y2="259.52"/><line x1="116" y1="274.15" x2="789" y2="274.15"/><line x1="116" y1="288.78" x2="789" y2="288.78"/><line x1="116" y1="303.41" x2="789" y2="303.41"/><line x1="116" y1="318.04" x2="789" y2="318.04"/><line x1="116" y1="332.67" x2="789" y2="332.67"/><line x1="116" y1="347.30" x2="789" y2="347.30"/><line x1="116" y1="361.93" x2="789" y2="361.93"/><line x1="116" y1="376.56" x2="789" y2="376.56"/><line x1="116" y1="391.19" x2="789" y2="391.19"/><line x1="116" y1="405.82" x2="789" y2="405.82"/></g>
<line x1="130.8" y1="40" x2="130.8" y2="413.8" stroke="#666400" stroke-width="1.4"/>
<line x1="149.4" y1="40" x2="149.4" y2="413.8" stroke="#9c9800" stroke-width="1.15"/>
<path d="M116.4,280.0 L116.9,274.8 L117.4,269.7 L117.9,264.7 L118.4,260.0 L118.9,255.4 L119.4,251.0 L119.9,246.9 L120.4,243.1 L120.9,239.5 L121.4,236.3 L121.9,233.4 L122.4,230.9 L122.9,228.7 L123.4,227.0 L123.9,225.7 L124.4,224.9 L124.9,224.5 L125.4,224.6 L125.9,225.2 L126.4,226.1 L126.9,227.4 L127.4,229.0 L127.9,230.9 L128.4,233.1 L128.9,235.4 L129.4,238.0 L129.9,240.7 L130.4,243.5 L130.9,246.4 L131.4,249.3 L131.9,252.3 L132.4,255.2 L132.9,258.1 L133.4,260.9 L133.9,263.5 L134.4,266.1 L134.9,268.4 L135.4,270.5 L135.9,272.3 L136.4,273.9 L136.9,275.1 L137.4,276.0 L137.9,276.4 L138.4,276.5 L138.9,276.2 L139.4,275.5 L139.9,274.6 L140.4,273.4 L140.9,272.0 L141.4,270.3 L141.9,268.5 L142.4,266.4 L142.9,264.2 L143.4,261.8 L143.9,259.3 L144.4,256.8 L144.9,254.1 L145.4,251.4 L145.9,248.6 L146.4,245.9 L146.9,243.2 L147.4,240.5 L147.9,237.8 L148.4,235.3 L148.9,232.8 L149.4,230.5 L149.9,228.3 L150.4,226.2 L150.9,224.4 L151.4,222.8 L151.9,221.4 L152.4,220.3 L152.9,219.4 L153.4,218.8 L153.9,218.6 L154.4,218.7 L154.9,219.2 L155.4,220.0 L155.9,221.2 L156.4,222.6 L156.9,224.3 L157.4,226.3 L157.9,228.6 L158.4,231.0 L158.9,233.7 L159.4,236.6 L159.9,239.6 L160.4,242.7 L160.9,246.0 L161.4,249.4 L161.9,252.9 L162.4,256.4 L162.9,260.0 L163.4,263.6 L163.9,267.2 L164.4,270.8 L164.9,274.3 L165.4,277.8 L165.9,281.2 L166.4,284.6 L166.9,287.8 L167.4,290.9 L167.9,293.8 L168.4,296.5 L168.9,299.1 L169.4,301.4 L169.9,303.5 L170.4,305.3 L170.9,306.9 L171.4,308.2 L171.9,309.1 L172.4,309.7 L172.9,310.0 L173.4,309.8 L173.9,309.0 L174.4,307.6 L174.9,305.7 L175.4,303.3 L175.9,300.5 L176.4,297.3 L176.9,293.7 L177.4,289.7 L177.9,285.5 L178.4,281.0 L178.9,276.4 L179.4,271.6 L179.9,266.6 L180.4,261.6 L180.9,256.5 L181.4,251.4 L181.9,246.4 L182.4,241.4 L182.9,236.6 L183.4,232.0 L183.9,227.5 L184.4,223.3 L184.9,219.3 L185.4,215.7 L185.9,212.5 L186.4,209.7 L186.9,207.3 L187.4,205.4 L187.9,204.0 L188.4,203.2 L188.9,203.0 L189.4,203.2 L189.9,203.8 L190.4,204.6 L190.9,205.7 L191.4,207.1 L191.9,208.7 L192.4,210.5 L192.9,212.5 L193.4,214.8 L193.9,217.2 L194.4,219.8 L194.9,222.5 L195.4,225.4 L195.9,228.3 L196.4,231.4 L196.9,234.6 L197.4,237.8 L197.9,241.0 L198.4,244.3 L198.9,247.7 L199.4,251.0 L199.9,254.3 L200.4,257.6 L200.9,260.8 L201.4,264.0 L201.9,267.1 L202.4,270.1 L202.9,272.9 L203.4,275.7 L203.9,278.3 L204.4,280.8 L204.9,283.0 L205.4,285.1 L205.9,287.0 L206.4,288.6 L206.9,290.1 L207.4,291.2 L207.9,292.1 L208.4,292.7 L208.9,293.0 L209.4,292.9 L209.9,292.6 L210.4,292.0 L210.9,291.1 L211.4,289.9 L211.9,288.5 L212.4,286.8 L212.9,285.0 L213.4,282.9 L213.9,280.7 L214.4,278.3 L214.9,275.8 L215.4,273.1 L215.9,270.4 L216.4,267.5 L216.9,264.6 L217.4,261.6 L217.9,258.6 L218.4,255.5 L218.9,252.4 L219.4,249.4 L219.9,246.3 L220.4,243.3 L220.9,240.4 L221.4,237.5 L221.9,234.7 L222.4,232.0 L222.9,229.5 L223.4,227.1 L223.9,224.8 L224.4,222.7 L224.9,220.8 L225.4,219.1 L225.9,217.7 L226.4,216.5 L226.9,215.5 L227.4,214.8 L227.9,214.4 L228.4,214.3 L228.9,214.5 L229.4,214.9 L229.9,215.5 L230.4,216.3 L230.9,217.3 L231.4,218.5 L231.9,219.8 L232.4,221.4 L232.9,223.0 L233.4,224.9 L233.9,226.8 L234.4,228.9 L234.9,231.1 L235.4,233.4 L235.9,235.8 L236.4,238.3 L236.9,240.8 L237.4,243.4 L237.9,246.1 L238.4,248.8 L238.9,251.6 L239.4,254.3 L239.9,257.1 L240.4,259.9 L240.9,262.6 L241.4,265.4 L241.9,268.1 L242.4,270.8 L242.9,273.4 L243.4,276.0 L243.9,278.5 L244.4,281.0 L244.9,283.3 L245.4,285.5 L245.9,287.7 L246.4,289.7 L246.9,291.6 L247.4,293.3 L247.9,294.9 L248.4,296.3 L248.9,297.6 L249.4,298.7 L249.9,299.5 L250.4,300.2 L250.9,300.7 L251.4,301.0 L251.9,301.0 L252.4,300.5 L252.9,299.6 L253.4,298.2 L253.9,296.4 L254.4,294.2 L254.9,291.7 L255.4,288.9 L255.9,285.7 L256.4,282.4 L256.9,278.7 L257.4,274.9 L257.9,270.9 L258.4,266.8 L258.9,262.6 L259.4,258.3 L259.9,254.0 L260.4,249.7 L260.9,245.4 L261.4,241.1 L261.9,236.9 L262.4,232.8 L262.9,228.9 L263.4,225.2 L263.9,221.7 L264.4,218.4 L264.9,215.4 L265.4,212.6 L265.9,210.2 L266.4,208.2 L266.9,206.6 L267.4,205.4 L267.9,204.7 L268.4,204.4 L268.9,204.7 L269.4,205.5 L269.9,206.9 L270.4,208.7 L270.9,210.9 L271.4,213.5 L271.9,216.4 L272.4,219.7 L272.9,223.2 L273.4,227.0 L273.9,230.9 L274.4,235.0 L274.9,239.2 L275.4,243.5 L275.9,247.8 L276.4,252.1 L276.9,256.3 L277.4,260.4 L277.9,264.4 L278.4,268.3 L278.9,271.9 L279.4,275.3 L279.9,278.4 L280.4,281.1 L280.9,283.5 L281.4,285.5 L281.9,287.0 L282.4,288.0 L282.9,288.6 L283.4,288.5 L283.9,287.9 L284.4,286.8 L284.9,285.3 L285.4,283.3 L285.9,281.0 L286.4,278.4 L286.9,275.6 L287.4,272.5 L287.9,269.2 L288.4,265.8 L288.9,262.3 L289.4,258.8 L289.9,255.3 L290.4,251.8 L290.9,248.5 L291.4,245.3 L291.9,242.3 L292.4,239.5 L292.9,237.0 L293.4,234.8 L293.9,233.1 L294.4,231.7 L294.9,230.8 L295.4,230.4 L295.9,230.5 L296.4,230.9 L296.9,231.6 L297.4,232.6 L297.9,233.8 L298.4,235.2 L298.9,236.8 L299.4,238.6 L299.9,240.5 L300.4,242.6 L300.9,244.7 L301.4,246.9 L301.9,249.1 L302.4,251.4 L302.9,253.6 L303.4,255.8 L303.9,258.0 L304.4,260.1 L304.9,262.0 L305.4,263.9 L305.9,265.6 L306.4,267.1 L306.9,268.4 L307.4,269.4 L307.9,270.2 L308.4,270.8 L308.9,271.0 L309.4,270.9 L309.9,270.7 L310.4,270.2 L310.9,269.6 L311.4,268.8 L311.9,267.9 L312.4,266.9 L312.9,265.9 L313.4,264.7 L313.9,263.6 L314.4,262.3 L314.9,261.1 L315.4,259.9 L315.9,258.8 L316.4,257.7 L316.9,256.6 L317.4,255.7 L317.9,254.9 L318.4,254.2 L318.9,253.7 L319.4,253.4 L319.9,253.2 L320.4,253.2 L320.9,253.3 L321.4,253.5 L321.9,253.7 L322.4,253.9 L322.9,254.1 L323.4,254.2 L323.9,254.3 L324.4,254.2 L324.9,253.9 L325.4,253.3 L325.9,252.5 L326.4,251.6 L326.9,250.4 L327.4,249.1 L327.9,247.7 L328.4,246.1 L328.9,244.5 L329.4,242.8 L329.9,241.0 L330.4,239.3 L330.9,237.5 L331.4,235.7 L331.9,234.0 L332.4,232.3 L332.9,230.7 L333.4,229.1 L333.9,227.7 L334.4,226.5 L334.9,225.3 L335.4,224.4 L335.9,223.7 L336.4,223.1 L336.9,222.8 L337.4,222.8 L337.9,223.0 L338.4,223.4 L338.9,224.1 L339.4,224.9 L339.9,225.9 L340.4,227.0 L340.9,228.3 L341.4,229.8 L341.9,231.4 L342.4,233.1 L342.9,235.0 L343.4,236.9 L343.9,239.0 L344.4,241.1 L344.9,243.3 L345.4,245.6 L345.9,247.9 L346.4,250.2 L346.9,252.6 L347.4,254.9 L347.9,257.3 L348.4,259.7 L348.9,262.1 L349.4,264.4 L349.9,266.7 L350.4,268.9 L350.9,271.1 L351.4,273.2 L351.9,275.3 L352.4,277.2 L352.9,279.0 L353.4,280.7 L353.9,282.3 L354.4,283.7 L354.9,285.0 L355.4,286.2 L355.9,287.1 L356.4,287.9 L356.9,288.5 L357.4,288.8 L357.9,289.0 L358.4,288.9 L358.9,288.4 L359.4,287.5 L359.9,286.4 L360.4,284.9 L360.9,283.1 L361.4,281.1 L361.9,278.8 L362.4,276.3 L362.9,273.6 L363.4,270.7 L363.9,267.7 L364.4,264.5 L364.9,261.2 L365.4,257.7 L365.9,254.3 L366.4,250.7 L366.9,247.2 L367.4,243.6 L367.9,240.0 L368.4,236.4 L368.9,232.9 L369.4,229.5 L369.9,226.2 L370.4,223.0 L370.9,219.9 L371.4,217.0 L371.9,214.2 L372.4,211.7 L372.9,209.3 L373.4,207.3 L373.9,205.4 L374.4,203.9 L374.9,202.7 L375.4,201.8 L375.9,201.2 L376.4,201.0 L376.9,201.3 L377.4,202.1 L377.9,203.4 L378.4,205.2 L378.9,207.4 L379.4,210.0 L379.9,212.9 L380.4,216.2 L380.9,219.8 L381.4,223.6 L381.9,227.7 L382.4,231.9 L382.9,236.3 L383.4,240.9 L383.9,245.5 L384.4,250.2 L384.9,254.9 L385.4,259.6 L385.9,264.2 L386.4,268.8 L386.9,273.2 L387.4,277.5 L387.9,281.6 L388.4,285.5 L388.9,289.1 L389.4,292.4 L389.9,295.5 L390.4,298.1 L390.9,300.4 L391.4,302.3 L391.9,303.7 L392.4,304.6 L392.9,305.0 L393.4,304.9 L393.9,304.4 L394.4,303.7 L394.9,302.6 L395.4,301.2 L395.9,299.6 L396.4,297.7 L396.9,295.6 L397.4,293.3 L397.9,290.8 L398.4,288.2 L398.9,285.3 L399.4,282.4 L399.9,279.4 L400.4,276.2 L400.9,273.0 L401.4,269.7 L401.9,266.4 L402.4,263.1 L402.9,259.8 L403.4,256.5 L403.9,253.3 L404.4,250.1 L404.9,247.0 L405.4,244.0 L405.9,241.1 L406.4,238.4 L406.9,235.9 L407.4,233.5 L407.9,231.3 L408.4,229.3 L408.9,227.6 L409.4,226.1 L409.9,224.9 L410.4,224.0 L410.9,223.5 L411.4,223.2 L411.9,223.3 L412.4,223.8 L412.9,224.6 L413.4,225.8 L413.9,227.2 L414.4,228.9 L414.9,230.9 L415.4,233.0 L415.9,235.3 L416.4,237.8 L416.9,240.5 L417.4,243.2 L417.9,246.0 L418.4,248.9 L418.9,251.8 L419.4,254.7 L419.9,257.6 L420.4,260.4 L420.9,263.2 L421.4,265.8 L421.9,268.4 L422.4,270.7 L422.9,272.9 L423.4,274.9 L423.9,276.7 L424.4,278.2 L424.9,279.4 L425.4,280.3 L425.9,280.8 L426.4,281.0 L426.9,280.8 L427.4,280.1 L427.9,279.1 L428.4,277.7 L428.9,276.0 L429.4,274.0 L429.9,271.7 L430.4,269.3 L430.9,266.6 L431.4,263.8 L431.9,261.0 L432.4,258.0 L432.9,255.0 L433.4,252.0 L433.9,249.0 L434.4,246.2 L434.9,243.4 L435.4,240.7 L435.9,238.3 L436.4,236.0 L436.9,234.0 L437.4,232.3 L437.9,230.9 L438.4,229.9 L438.9,229.2 L439.4,229.0 L439.9,229.2 L440.4,229.9 L440.9,231.0 L441.4,232.5 L441.9,234.3 L442.4,236.4 L442.9,238.8 L443.4,241.4 L443.9,244.1 L444.4,247.0 L444.9,250.1 L445.4,253.2 L445.9,256.3 L446.4,259.4 L446.9,262.5 L447.4,265.5 L447.9,268.4 L448.4,271.2 L448.9,273.7 L449.4,276.0 L449.9,278.1 L450.4,279.8 L450.9,281.2 L451.4,282.2 L451.9,282.8 L452.4,283.0 L452.9,282.7 L453.4,282.1 L453.9,281.2 L454.4,280.0 L454.9,278.5 L455.4,276.7 L455.9,274.8 L456.4,272.6 L456.9,270.2 L457.4,267.7 L457.9,265.1 L458.4,262.3 L458.9,259.5 L459.4,256.6 L459.9,253.7 L460.4,250.7 L460.9,247.8 L461.4,244.9 L461.9,242.1 L462.4,239.3 L462.9,236.7 L463.4,234.2 L463.9,231.8 L464.4,229.6 L464.9,227.7 L465.4,225.9 L465.9,224.4 L466.4,223.2 L466.9,222.3 L467.4,221.7 L467.9,221.4 L468.4,221.5 L468.9,221.9 L469.4,222.5 L469.9,223.4 L470.4,224.5 L470.9,225.8 L471.4,227.3 L471.9,229.0 L472.4,230.9 L472.9,232.9 L473.4,235.0 L473.9,237.3 L474.4,239.7 L474.9,242.2 L475.4,244.7 L475.9,247.3 L476.4,249.9 L476.9,252.6 L477.4,255.3 L477.9,257.9 L478.4,260.6 L478.9,263.2 L479.4,265.7 L479.9,268.2 L480.4,270.6 L480.9,272.9 L481.4,275.1 L481.9,277.1 L482.4,279.0 L482.9,280.8 L483.4,282.3 L483.9,283.7 L484.4,284.8 L484.9,285.8 L485.4,286.4 L485.9,286.9 L486.4,287.0 L486.9,286.9 L487.4,286.6 L487.9,286.2 L488.4,285.6 L488.9,284.9 L489.4,284.0 L489.9,283.0 L490.4,281.8 L490.9,280.5 L491.4,279.1 L491.9,277.6 L492.4,276.0 L492.9,274.3 L493.4,272.5 L493.9,270.7 L494.4,268.7 L494.9,266.7 L495.4,264.6 L495.9,262.5 L496.4,260.4 L496.9,258.2 L497.4,255.9 L497.9,253.7 L498.4,251.4 L498.9,249.1 L499.4,246.9 L499.9,244.6 L500.4,242.3 L500.9,240.1 L501.4,237.9 L501.9,235.7 L502.4,233.6 L502.9,231.5 L503.4,229.5 L503.9,227.5 L504.4,225.6 L504.9,223.8 L505.4,222.1 L505.9,220.5 L506.4,219.0 L506.9,217.5 L507.4,216.2 L507.9,215.1 L508.4,214.0 L508.9,213.1 L509.4,212.3 L509.9,211.7 L510.4,211.2 L510.9,210.9 L511.4,210.8 L511.9,210.9 L512.4,211.5 L512.9,212.5 L513.4,213.9 L513.9,215.6 L514.4,217.7 L514.9,220.1 L515.4,222.7 L515.9,225.6 L516.4,228.7 L516.9,232.0 L517.4,235.5 L517.9,239.1 L518.4,242.8 L518.9,246.7 L519.4,250.5 L519.9,254.4 L520.4,258.3 L520.9,262.1 L521.4,266.0 L521.9,269.7 L522.4,273.3 L522.9,276.8 L523.4,280.1 L523.9,283.2 L524.4,286.1 L524.9,288.7 L525.4,291.1 L525.9,293.2 L526.4,294.9 L526.9,296.3 L527.4,297.3 L527.9,297.9 L528.4,298.0 L528.9,297.8 L529.4,297.4 L529.9,296.8 L530.4,296.0 L530.9,295.0 L531.4,293.8 L531.9,292.5 L532.4,290.9 L532.9,289.3 L533.4,287.4 L533.9,285.5 L534.4,283.4 L534.9,281.3 L535.4,279.0 L535.9,276.6 L536.4,274.2 L536.9,271.7 L537.4,269.1 L537.9,266.5 L538.4,263.9 L538.9,261.2 L539.4,258.6 L539.9,255.9 L540.4,253.2 L540.9,250.6 L541.4,248.0 L541.9,245.4 L542.4,242.9 L542.9,240.5 L543.4,238.1 L543.9,235.8 L544.4,233.6 L544.9,231.5 L545.4,229.5 L545.9,227.7 L546.4,226.0 L546.9,224.4 L547.4,223.0 L547.9,221.8 L548.4,220.8 L548.9,219.9 L549.4,219.3 L549.9,218.8 L550.4,218.6 L550.9,218.7 L551.4,219.0 L551.9,219.6 L552.4,220.4 L552.9,221.5 L553.4,222.8 L553.9,224.3 L554.4,225.9 L554.9,227.7 L555.4,229.7 L555.9,231.7 L556.4,233.8 L556.9,235.9 L557.4,238.1 L557.9,240.4 L558.4,242.6 L558.9,244.8 L559.4,246.9 L559.9,249.0 L560.4,251.0 L560.9,252.8 L561.4,254.6 L561.9,256.2 L562.4,257.6 L562.9,258.8 L563.4,259.8 L563.9,260.8 L564.4,261.6 L564.9,262.5 L565.4,263.2 L565.9,264.0 L566.4,264.7 L566.9,265.5 L567.4,266.3 L567.9,267.0 L568.4,267.9 L568.9,268.8 L569.4,269.8 L569.9,271.1 L570.4,272.5 L570.9,274.0 L571.4,275.5 L571.9,277.0 L572.4,278.5 L572.9,279.8 L573.4,281.0 L573.9,282.0 L574.4,282.6 L574.9,283.0 L575.4,282.9 L575.9,282.4 L576.4,281.4 L576.9,280.1 L577.4,278.4 L577.9,276.3 L578.4,274.0 L578.9,271.4 L579.4,268.6 L579.9,265.6 L580.4,262.5 L580.9,259.3 L581.4,256.1 L581.9,252.8 L582.4,249.5 L582.9,246.2 L583.4,243.1 L583.9,240.1 L584.4,237.2 L584.9,234.5 L585.4,232.1 L585.9,229.9 L586.4,228.1 L586.9,226.6 L587.4,225.4 L587.9,224.7 L588.4,224.5 L588.9,224.7 L589.4,225.1 L589.9,225.9 L590.4,227.0 L590.9,228.3 L591.4,229.8 L591.9,231.5 L592.4,233.4 L592.9,235.5 L593.4,237.7 L593.9,240.0 L594.4,242.4 L594.9,244.9 L595.4,247.4 L595.9,249.9 L596.4,252.5 L596.9,255.0 L597.4,257.5 L597.9,259.9 L598.4,262.2 L598.9,264.4 L599.4,266.5 L599.9,268.4 L600.4,270.1 L600.9,271.6 L601.4,272.9 L601.9,274.0 L602.4,274.8 L602.9,275.2 L603.4,275.4 L603.9,275.3 L604.4,275.0 L604.9,274.4 L605.4,273.7 L605.9,272.8 L606.4,271.7 L606.9,270.5 L607.4,269.1 L607.9,267.5 L608.4,265.9 L608.9,264.1 L609.4,262.2 L609.9,260.2 L610.4,258.1 L610.9,256.0 L611.4,253.8 L611.9,251.6 L612.4,249.3 L612.9,246.9 L613.4,244.6 L613.9,242.3 L614.4,239.9 L614.9,237.6 L615.4,235.3 L615.9,233.0 L616.4,230.8 L616.9,228.7 L617.4,226.6 L617.9,224.6 L618.4,222.7 L618.9,220.9 L619.4,219.2 L619.9,217.6 L620.4,216.2 L620.9,214.9 L621.4,213.8 L621.9,212.9 L622.4,212.1 L622.9,211.5 L623.4,211.2 L623.9,211.0 L624.4,211.2 L624.9,211.8 L625.4,212.9 L625.9,214.3 L626.4,216.2 L626.9,218.4 L627.4,221.0 L627.9,223.8 L628.4,227.0 L628.9,230.3 L629.4,233.9 L629.9,237.6 L630.4,241.5 L630.9,245.5 L631.4,249.5 L631.9,253.7 L632.4,257.8 L632.9,262.0 L633.4,266.1 L633.9,270.1 L634.4,274.1 L634.9,277.9 L635.4,281.6 L635.9,285.1 L636.4,288.3 L636.9,291.3 L637.4,294.1 L637.9,296.5 L638.4,298.6 L638.9,300.3 L639.4,301.6 L639.9,302.5 L640.4,303.0 L640.9,302.9 L641.4,302.6 L641.9,302.0 L642.4,301.2 L642.9,300.1 L643.4,298.7 L643.9,297.1 L644.4,295.3 L644.9,293.4 L645.4,291.2 L645.9,288.9 L646.4,286.4 L646.9,283.7 L647.4,281.0 L647.9,278.1 L648.4,275.1 L648.9,272.1 L649.4,268.9 L649.9,265.7 L650.4,262.5 L650.9,259.2 L651.4,255.9 L651.9,252.6 L652.4,249.3 L652.9,246.0 L653.4,242.8 L653.9,239.6 L654.4,236.4 L654.9,233.4 L655.4,230.4 L655.9,227.5 L656.4,224.8 L656.9,222.1 L657.4,219.6 L657.9,217.3 L658.4,215.1 L658.9,213.2 L659.4,211.4 L659.9,209.8 L660.4,208.4 L660.9,207.3 L661.4,206.5 L661.9,205.9 L662.4,205.6 L662.9,205.5 L663.4,205.9 L663.9,206.6 L664.4,207.6 L664.9,209.0 L665.4,210.7 L665.9,212.6 L666.4,214.8 L666.9,217.3 L667.4,220.0 L667.9,222.9 L668.4,225.9 L668.9,229.2 L669.4,232.6 L669.9,236.1 L670.4,239.7 L670.9,243.4 L671.4,247.2 L671.9,251.0 L672.4,254.9 L672.9,258.7 L673.4,262.6 L673.9,266.4 L674.4,270.2 L674.9,273.9 L675.4,277.5 L675.9,281.0 L676.4,284.4 L676.9,287.7 L677.4,290.7 L677.9,293.6 L678.4,296.3 L678.9,298.8 L679.4,301.0 L679.9,302.9 L680.4,304.6 L680.9,306.0 L681.4,307.0 L681.9,307.7 L682.4,308.1 L682.9,308.0 L683.4,307.3 L683.9,306.0 L684.4,304.3 L684.9,302.0 L685.4,299.3 L685.9,296.1 L686.4,292.7 L686.9,288.9 L687.4,284.8 L687.9,280.5 L688.4,276.1 L688.9,271.5 L689.4,266.8 L689.9,262.0 L690.4,257.3 L690.9,252.6 L691.4,248.0 L691.9,243.5 L692.4,239.1 L692.9,235.0 L693.4,231.2 L693.9,227.6 L694.4,224.4 L694.9,221.6 L695.4,219.3 L695.9,217.4 L696.4,216.0 L696.9,215.2 L697.4,215.0 L697.9,215.3 L698.4,216.0 L698.9,217.1 L699.4,218.6 L699.9,220.4 L700.4,222.4 L700.9,224.7 L701.4,227.3 L701.9,230.0 L702.4,232.9 L702.9,235.9 L703.4,239.0 L703.9,242.1 L704.4,245.3 L704.9,248.5 L705.4,251.7 L705.9,254.7 L706.4,257.7 L706.9,260.6 L707.4,263.3 L707.9,265.7 L708.4,268.0 L708.9,270.0 L709.4,271.7 L709.9,273.1 L710.4,274.1 L710.9,274.8 L711.4,275.0 L711.9,274.9 L712.4,274.6 L712.9,274.0 L713.4,273.3 L713.9,272.4 L714.4,271.3 L714.9,270.0 L715.4,268.6 L715.9,267.1 L716.4,265.5 L716.9,263.7 L717.4,261.9 L717.9,259.9 L718.4,257.9 L718.9,255.8 L719.4,253.7 L719.9,251.6 L720.4,249.4 L720.9,247.2 L721.4,245.0 L721.9,242.8 L722.4,240.7 L722.9,238.6 L723.4,236.5 L723.9,234.5 L724.4,232.5 L724.9,230.7 L725.4,228.9 L725.9,227.3 L726.4,225.8 L726.9,224.4 L727.4,223.1 L727.9,222.0 L728.4,221.1 L728.9,220.4 L729.4,219.8 L729.9,219.5 L730.4,219.4 L730.9,219.7 L731.4,220.6 L731.9,222.1 L732.4,224.0 L732.9,226.4 L733.4,229.2 L733.9,232.3 L734.4,235.8 L734.9,239.4 L735.4,243.2 L735.9,247.2 L736.4,251.3 L736.9,255.3 L737.4,259.4 L737.9,263.4 L738.4,267.2 L738.9,270.9 L739.4,274.4 L739.9,277.6 L740.4,280.4 L740.9,282.9 L741.4,285.0 L741.9,286.5 L742.4,287.5 L742.9,288.0 L743.4,287.9 L743.9,287.4 L744.4,286.6 L744.9,285.5 L745.4,284.1 L745.9,282.4 L746.4,280.4 L746.9,278.3 L747.4,276.0 L747.9,273.4 L748.4,270.8 L748.9,268.0 L749.4,265.1 L749.9,262.2 L750.4,259.1 L750.9,256.1 L751.4,253.1 L751.9,250.0 L752.4,247.1 L752.9,244.1 L753.4,241.3 L753.9,238.6 L754.4,236.0 L754.9,233.6 L755.4,231.4 L755.9,229.4 L756.4,227.6 L756.9,226.1 L757.4,224.8 L757.9,223.9 L758.4,223.3 L758.9,223.0 L759.4,223.1 L759.9,223.6 L760.4,224.4 L760.9,225.5 L761.4,226.9 L761.9,228.6 L762.4,230.6 L762.9,232.7 L763.4,235.0 L763.9,237.6 L764.4,240.2 L764.9,243.0 L765.4,245.9 L765.9,248.8 L766.4,251.9 L766.9,254.9 L767.4,257.9 L767.9,261.0 L768.4,263.9 L768.9,266.9 L769.4,269.7 L769.9,272.4 L770.4,275.0 L770.9,277.4 L771.4,279.6 L771.9,281.6 L772.4,283.4 L772.9,284.9 L773.4,286.2 L773.9,287.1 L774.4,287.7 L774.9,288.0 L775.4,288.0 L775.9,287.8 L776.4,287.5 L776.9,287.1 L777.4,286.6 L777.9,286.0 L778.4,285.2 L778.9,284.3 L779.4,283.3 L779.9,282.2 L780.4,280.9 L780.9,279.6 L781.4,278.1 L781.9,276.5 L782.4,274.7 L782.9,272.8 L783.4,270.9 L783.9,268.7 L784.4,266.5 L784.9,264.1 L785.4,261.6 L785.9,259.0 L786.4,256.3 L786.9,253.4 L787.4,250.4 L787.9,247.3 L788.4,244.1 L788.9,240.7" fill="none" stroke="#a82626" stroke-width="1"/>
<!-- cursor markers -->
<path d="M127.5 420 V415 Q127.5 413.8 128.7 413.8 H133 Q134.2 413.8 134.2 415 V420" fill="none" stroke="#5e5c00" stroke-width="1"/>
<rect x="127.5" y="420.3" width="6.7" height="6.8" fill="#7c7a00" stroke="#6a6800" stroke-width="0.8"/>
<path d="M129.4 426.3 L130.85 421.8 L132.3 426.3" fill="none" stroke="#2e2e00" stroke-width="0.9"/>
<path d="M146.1 420.3 V415 Q146.1 413.8 147.3 413.8 H151.6 Q152.8 413.8 152.8 415 V420.3 Z" fill="none" stroke="#a09c00" stroke-width="1"/>
<path d="M147.5 419 L149.45 415.3 L151.4 419" fill="none" stroke="#b0ac00" stroke-width="0.9"/>
<rect x="146.1" y="420.5" width="6.7" height="6.6" fill="none" stroke="#5a5800" stroke-width="0.9"/>
<!-- channel marker -->
<path d="M107.3 256.6 V250 M105.4 252 L107.6 249.9" stroke="#ff3838" stroke-width="1.7" fill="none"/>
<path d="M110.2 253.3 L111.8 251 L114.2 253.3 L111.8 255.6 Z" fill="#ff3838"/>
</svg>

<!-- scrollbars -->
<svg class="a" style="left:0;top:0" width="800" height="450">
 <path d="M792.3 46.8 L794.3 44.6 L796.3 46.8 Z" fill="#555"/>
 <path d="M792.3 421.6 L794.3 423.8 L796.3 421.6 Z" fill="#555"/>
 <rect x="789.6" y="226.6" width="8.6" height="8.8" rx="1.5" fill="url(#thumbv)" stroke="#a3a3a3" stroke-width="0.8"/>
 <path d="M107.8 430.7 L105.6 432.7 L107.8 434.7 Z" fill="#555"/>
 <path d="M783 430.7 L785.2 432.7 L783 434.7 Z" fill="#555"/>
 <rect x="231.5" y="428" width="9.5" height="9.5" rx="1.5" fill="url(#thumbh)" stroke="#a3a3a3" stroke-width="0.8"/>
 <defs>
  <linearGradient id="thumbv" x1="0" x2="1" y1="0" y2="0"><stop offset="0" stop-color="#f6f6f6"/><stop offset="1" stop-color="#dcdcdc"/></linearGradient>
  <linearGradient id="thumbh" x1="0" x2="0" y1="0" y2="1"><stop offset="0" stop-color="#f6f6f6"/><stop offset="1" stop-color="#dcdcdc"/></linearGradient>
 </defs>
</svg>
<!-- status bar -->
<div class="a" style="left:607px;top:439px;width:1px;height:9px;background:#d4d4d4"></div>
<div class="a" style="left:798.7px;top:40px;width:1.3px;height:398px;background:#e9ecef"></div>
<div class="t" style="left:1.5px;top:440.86px;font-size:8.2px;color:#2a2a3a;font-weight:normal;font-family:'Liberation Sans',sans-serif;transform:scaleX(0.814);">Готов...</div>
<div class="t" style="left:609.7px;top:440.86px;font-size:8.2px;color:#2a2a3a;font-weight:normal;font-family:'Liberation Sans',sans-serif;transform:scaleX(0.811);">Полное время файла: 0000:20:06.042.88</div>
</body></html>
